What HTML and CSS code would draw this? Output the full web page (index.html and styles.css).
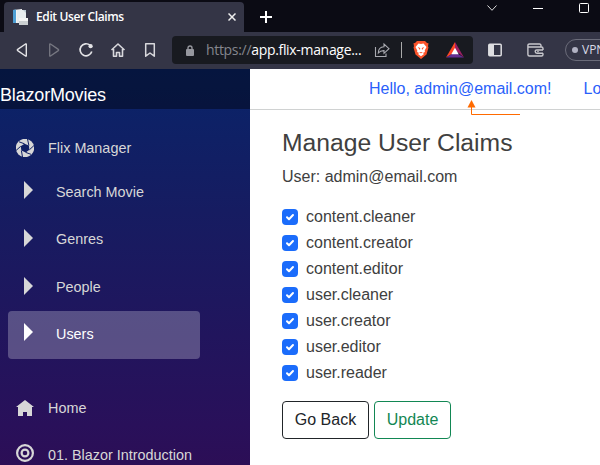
FILE: index.html
```html
<!DOCTYPE html>
<html lang="en">
<head>
<meta charset="utf-8">
<title>Edit User Claims</title>
<link rel="stylesheet" href="styles.css">
</head>
<body>
<div class="browser">
  <div class="tabbar">
    <div class="tab">
      <svg class="favicon" width="16" height="16" viewBox="0 0 16 16"><path d="M1 1l9-1v14H1z" fill="#f2f4f5"/><path d="M1 1l3-.5V14H1z" fill="#4e9fd4"/><path d="M5 1h9v13H5z" fill="#e8edef"/><path d="M11 1h3v3z" fill="#b9c9d2"/><path d="M7 9h9v7H7z" fill="#cbd0d2"/><path d="M7 9h9v3H7z" fill="#f4f5f5"/></svg>
      <span class="tab-title">Edit User Claims</span>
      <svg class="tab-close" width="8" height="8" viewBox="0 0 8 8"><path d="M.5.5l7 7m0-7l-7 7" stroke="#eee" stroke-width="1.5"/></svg>
    </div>
    <svg class="newtab" width="12" height="12" viewBox="0 0 12 12"><path d="M6 0v12M0 6h12" stroke="#fff" stroke-width="2"/></svg>
    <div class="window-controls">
      <svg width="10" height="6" viewBox="0 0 10 6"><path d="M.5.5L5 5.3 9.5.5" fill="none" stroke="#ddd"/></svg>
      <svg width="10" height="6" viewBox="0 0 10 6"><path d="M0 3.5h10" stroke="#fff"/></svg>
      <svg width="10" height="10" viewBox="0 0 10 10"><rect x=".5" y=".5" width="9" height="9" rx="1" fill="none" stroke="#fff"/></svg>
    </div>
  </div>
  <div class="toolbar">
    <div class="nav-buttons">
      <svg width="16" height="16" viewBox="0 0 16 16"><path d="M12.3 2.3v11.4q0 .8-.8.3L3.7 8.6q-.8-.6 0-1.2L11.5 2q.8-.5.8.3z" fill="none" stroke="#e3e3e6" stroke-width="1.4"/></svg>
      <svg width="16" height="16" viewBox="0 0 16 16"><path d="M3.7 2.3v11.4q0 .8.8.3l7.8-5.4q.8-.6 0-1.2L4.500 2q-.8-.5-.8.3z" fill="none" stroke="#777882" stroke-width="1.3"/></svg>
      <svg width="16" height="16" viewBox="0 0 16 16"><path d="M12 3.2A6 6 0 1 0 13.8 9.6" fill="none" stroke="#e3e3e6" stroke-width="1.7"/><circle cx="12.600" cy="4.200" r="2.100" fill="#e3e3e6"/></svg>
      <svg width="16" height="16" viewBox="0 0 16 16"><path d="M1.5 8L8 2l6.500 6M3.500 7v7.200h3v-3.700h3v3.700h3V7" fill="none" stroke="#d8d8dc" stroke-width="1.6" stroke-linejoin="round"/></svg>
      <svg width="16" height="16" viewBox="0 0 16 16"><path d="M3.700 1.700h8.600v12.500L8 11l-4.300 3.200z" fill="none" stroke="#d8d8dc" stroke-width="1.5" stroke-linejoin="round"/></svg>
    </div>
    <div class="address">
      <svg class="lock" width="8" height="11" viewBox="0 0 8 11"><path d="M2 5V3a2 2 0 0 1 4 0v2" fill="none" stroke="#96979e" stroke-width="1.4"/><rect y="4" width="8" height="7" rx="1" fill="#96979e"/></svg>
      <span class="url"><span class="scheme">https://</span>app.flix-manage...</span>
      <svg class="share" width="16" height="16" viewBox="0 0 16 16"><path d="M1.500 5v9.500h10.500v-3M4.300 11q0-6 5.700-6.300V2l5 4.700-5 4.600V8.600Q6.300 8.500 4.300 11z" fill="none" stroke="#a9aab0" stroke-width="1.1"/></svg>
      <span class="divider"></span>
      <svg class="shield" width="16" height="18" viewBox="0 0 16 18"><path d="M4 0h8l2 2 1.500.2-.5 3 .5 1.300-2 7L8 18l-5.500-4.500-2-7L1 5.200.5 2.200 2 2z" fill="#fb542b"/><path d="M8 3l2.500-.4L13.500 6l-1.800 3.500.2 1.500-2 1L11 13l-3 2.200L5 13l1.100-1-2-1 .2-1.500L2.500 6l3-3.400z" fill="#fff"/><path d="M4.700 6l2.500 1-.2 2zm6.600 0l-2.500 1 .2 2zM6 11.700l2-.8 2 .8-2 .6z" fill="#fb542b"/></svg>
      <svg class="rewards" width="18" height="16" viewBox="0 0 18 16"><path d="M9 0L0 15.500 9 10z" fill="#ff4724"/><path d="M9 0v8l9 7.500z" fill="#9e1f63"/><path d="M0 15.500h18L12 12H6z" fill="#662d91"/><path d="M9 5.800l-3.700 6.400h7.400z" fill="#fff"/></svg>
    </div>
    <svg class="panel-icon" width="14" height="14" viewBox="0 0 14 14"><rect x=".8" y="1.200" width="12.400" height="11.600" rx="1" fill="none" stroke="#dedee1" stroke-width="1.500"/><path d="M1 1h5v12H1z" fill="#dedee1"/></svg>
    <svg class="wallet" width="17" height="14" viewBox="0 0 17 14"><path d="M14 4V2.500Q14 1 12.500 1H2.500Q.9 1 .9 2.500v9Q.9 13 2.500 13h12q1.500 0 1.500-1.500v-1.200M1 4h13.500q1.500 0 1.500 1.500V7M16 10.300h-6q-1.800 0-1.800-1.700T10 7h6" fill="none" stroke="#c8c8cd" stroke-width="1.400"/><circle cx="11" cy="8.600" r=".8" fill="#c8c8cd"/></svg>
    <div class="vpn"><i></i><span>VPN</span></div>
  </div>
</div>
<div class="app">
  <aside class="sidebar">
    <div class="brand">BlazorMovies</div>
    <nav>
      <a class="item top"><svg class="icon" width="18" height="18" viewBox="0 0 18 18"><circle cx="9" cy="9" r="9.200"/><path class="cut" d="M8.500 4.800l4.400 1.700.5 4.300-3.700 2.600-4.300-1.800-.7-4.300z"/><path class="slit" d="M8.500 4.800L3 2.800M12.900 6.500L11.500 0M13.400 10.800L18 6.500M9.700 13.400l5.500 2M5.400 11.600L6.500 18M4.700 7.300L0 11.500"/></svg>Flix Manager</a>
      <a class="item sub"><svg class="icon" width="9" height="18" viewBox="0 0 9 18"><path d="M0 0l9 9-9 9z"/></svg>Search Movie</a>
      <a class="item sub"><svg class="icon" width="9" height="18" viewBox="0 0 9 18"><path d="M0 0l9 9-9 9z"/></svg>Genres</a>
      <a class="item sub"><svg class="icon" width="9" height="18" viewBox="0 0 9 18"><path d="M0 0l9 9-9 9z"/></svg>People</a>
      <a class="item sub active"><svg class="icon" width="9" height="18" viewBox="0 0 9 18"><path d="M0 0l9 9-9 9z"/></svg><span>Users</span></a>
      <a class="item top home"><svg class="icon" width="18" height="16" viewBox="0 0 18 16"><path d="M9 0l9 7h-2v9h-5v-4H7v4H2V7H0z"/></svg>Home</a>
      <a class="item top"><svg class="icon rings" width="18" height="18" viewBox="0 0 18 18"><circle class="ring" cx="9" cy="9" r="7.900"/><circle class="ring" cx="9" cy="9" r="3.400"/></svg>01. Blazor Introduction</a>
    </nav>
  </aside>
  <main>
    <header><span>Hello, admin@email.com!</span><span>Log out</span>
      <svg class="pointer" width="54" height="18" viewBox="0 0 54 18"><path d="M5.500 6v8.500H54" fill="none" stroke="#ff6a00"/><path d="M5.500 0l4 7.500h-8z" fill="#ff6a00"/></svg>
    </header>
    <section>
      <h1>Manage User Claims</h1>
      <p>User: admin@email.com</p>
      <div class="claims">
        <label><span class="check"><svg width="16" height="16" viewBox="0 0 16 16"><path d="M5 8.200l2 2 4-4.200"/></svg></span>content.cleaner</label>
        <label><span class="check"><svg width="16" height="16" viewBox="0 0 16 16"><path d="M5 8.200l2 2 4-4.200"/></svg></span>content.creator</label>
        <label><span class="check"><svg width="16" height="16" viewBox="0 0 16 16"><path d="M5 8.200l2 2 4-4.200"/></svg></span>content.editor</label>
        <label><span class="check"><svg width="16" height="16" viewBox="0 0 16 16"><path d="M5 8.200l2 2 4-4.200"/></svg></span>user.cleaner</label>
        <label><span class="check"><svg width="16" height="16" viewBox="0 0 16 16"><path d="M5 8.200l2 2 4-4.200"/></svg></span>user.creator</label>
        <label><span class="check"><svg width="16" height="16" viewBox="0 0 16 16"><path d="M5 8.200l2 2 4-4.200"/></svg></span>user.editor</label>
        <label><span class="check"><svg width="16" height="16" viewBox="0 0 16 16"><path d="M5 8.200l2 2 4-4.200"/></svg></span>user.reader</label>
      </div>
      <div class="actions"><button class="back">Go Back</button><button class="update">Update</button></div>
    </section>
  </main>
</div>
</body>
</html>
```
FILE: styles.css
```css
* { box-sizing: border-box; }
body { margin: 0; width: 600px; height: 465px; overflow: hidden; font: 16px/24px "Liberation Sans", Arial, sans-serif; color: #404040; background: #fff; }
svg { display: block; flex: none; }
.browser { height: 69px; font-family: "Open Sans", "Noto Sans", sans-serif; background: #343546; overflow: hidden; }
.tabbar { height: 32px; background: #0b0b14; display: flex; padding-left: 4px; }
.tab { width: 240px; height: 30px; margin-top: 2px; padding: 0 8px; background: #343546; border-radius: 4px 4px 0 0; display: flex; align-items: center; }
.tab-title { flex: 1; margin-left: 8px; color: #fff; font-size: 12px; font-weight: 600; letter-spacing: -.38px; }
.newtab { margin: 11px 0 0 16px; }
.window-controls { display: flex; margin-left: 215px; gap: 36px; padding-top: 5px; }
.window-controls svg:nth-child(3) { margin-top: -2px; }
.toolbar { height: 37px; display: flex; align-items: flex-start; padding: 4px 0 0 14px; }
.nav-buttons { display: flex; gap: 16px; padding-top: 6px; width: 158px; flex: none; }
.address { width: 301px; height: 28px; flex: none; background: #181a20; border-radius: 4px; display: flex; align-items: center; padding-left: 14px; }
.url { width: 157px; margin-left: 12px; color: #fff; font-size: 14px; letter-spacing: -.32px; white-space: nowrap; }
.scheme { color: #85868d; }
.share { margin-left: 11px; }
.divider { width: 1px; height: 16px; background: #aaa; margin-left: 11px; }
.shield { margin-left: 11px; }
.rewards { margin-left: 17px; }
.panel-icon { margin: 7px 0 0 15px; }
.wallet { margin: 7px 0 0 25px; }
.vpn { display: flex; align-items: center; width: 60px; height: 22px; flex: none; margin: 3px 0 0 21px; border: 1px solid #6b6c7a; border-radius: 11px; padding-left: 6px; color: #d9dbe8; font-size: 12px; }
.vpn i { width: 6px; height: 6px; background: #b1b2c3; border-radius: 50%; margin-right: 4px; }
.app { display: flex; height: 396px; }
.sidebar { width: 250px; height: 396px; overflow: hidden; background: linear-gradient(#092469, #161c61 36%, #29105a 90%, #2c0e56); }
.brand { height: 40px; background: rgba(0, 0, 0, .4); color: #fff; font-size: 18px; line-height: 52px; letter-spacing: -.18px; }
nav { padding: 15px 50px 0 8px; font-size: 14.4px; }
.item { height: 47.600px; display: flex; align-items: center; color: #d7d7d7; white-space: nowrap; }
.icon { fill: currentColor; }
.top { padding-left: 8px; }
.top .icon { margin-right: 14px; }
.top .rings { margin-top: -4px; }
.item:first-child { margin-bottom: -3.500px; }
.sub { padding-left: 16px; }
.sub .icon { margin: -3px 23px 0 0; }
.active { height: 48px; background: rgba(255, 255, 255, .25); color: #fff; border-radius: 4px; }
.active .icon { margin-top: -6px; }
.active span { margin-top: -2px; }
.home { margin-top: 25px; }
.cut { fill: #101f64; }
.slit { fill: none; stroke: #101f64; stroke-width: 1; }
.ring { fill: none; stroke: currentColor; stroke-width: 2.200; }
main { width: 350px; overflow: hidden; }
header { position: relative; height: 41px; border-bottom: 1px solid #d0d2d2; padding: 8px 0 0 119px; display: flex; gap: 32px; white-space: nowrap; color: #2a5ffa; }
.pointer { position: absolute; left: 216px; top: 31px; }
section { padding: 17px 32px 0; }
h1 { font-size: 24.700px; line-height: 32px; font-weight: 400; margin: 0 0 6px; white-space: nowrap; }
p { margin: 0 0 16px; }
.claims { display: flex; flex-direction: column; gap: 2px; }
label { display: flex; align-items: center; gap: 8px; height: 24px; }
.check { width: 16px; height: 16px; background: #1b6cfb; border-radius: 4px; }
.check path { fill: none; stroke: #fff; stroke-width: 2; stroke-linecap: round; stroke-linejoin: round; }
.actions { display: flex; gap: 5px; margin-top: 16px; }
button { height: 38px; padding: 0; border: 1px solid; border-radius: 4px; background: #fff; font: inherit; }
.back { width: 87px; color: #212529; }
.update { width: 77px; color: #128754; }
```
